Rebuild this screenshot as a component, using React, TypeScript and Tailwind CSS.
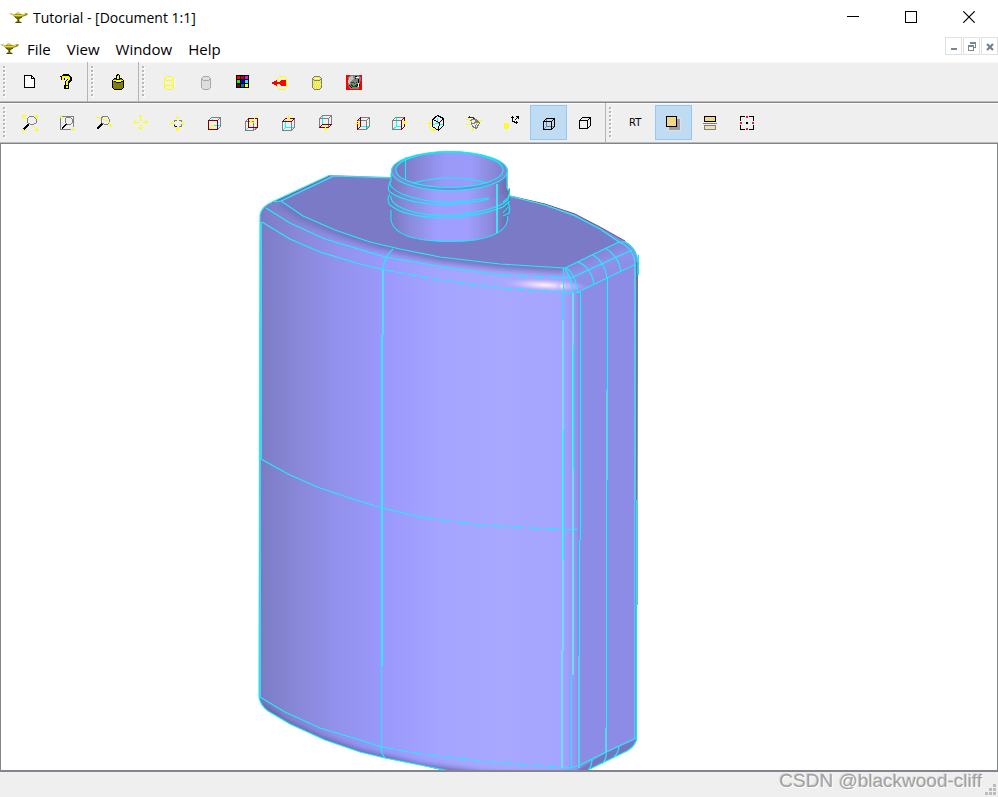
import type { ReactNode } from "react";

const GRAY = "#808080";
const RED = "#800000";
const YEL = "#ffff00";
const CYAN = "#00ffff";

function Stroke({ d, c = "#000", w = 1 }: { d: string; c?: string; w?: number }) {
  return <path d={d} stroke={c} strokeWidth={w} fill="none" />;
}

function Glyph({ children }: { children: ReactNode }) {
  return (
    <svg width="16" height="16" viewBox="0 0 16 16" shapeRendering="crispEdges" className="overflow-visible" aria-hidden="true">
      {children}
    </svg>
  );
}

function Lamp() {
  return (
    <svg width="19" height="12" viewBox="0 0 19 12" className="shrink-0" aria-hidden="true">
      <path d="M0 1.5 L3 1.6 L5 2.6 L7 1.6 L8 .6 L10 .6 L11 1.8 L14 2.6 L16 1.2 L18.5 1.2 L18.8 2.6 L17 3.8 L13 5 L10.6 7 L10.4 9 L12.5 10.4 L6 10.4 L8.2 9 L8 7 L5.5 5 L3.4 3 Z" fill="#9a8f14" />
      <path d="M3 2.2 L6 3.6 L12 3.6 L16 2.2 M7.5 1.6 H10.5" stroke="#efe040" strokeWidth="1" fill="none" />
      <path d="M6 5 L8 6.2 L11 6 L13 5 M6.5 10.4 H12.5 M9.4 7.5 V9.5" stroke="#3c3603" strokeWidth="1" fill="none" />
    </svg>
  );
}

type Tool = { name: string; icon: ReactNode; active?: boolean };

const fileTools: Tool[] = [
  {
    name: "New",
    icon: <><path d="M2.5 1.5 H9.5 L12.5 4.5 V13.5 H2.5 Z" fill="#fff" stroke="#000" /><Stroke d="M9.5 1.5 V4.5 H12.5" /></>,
  },
  {
    name: "Help",
    icon: (
      <>
        <Stroke d="M3.5 5.5 V3.5 L5.5 2 H8.5 L10.5 3.5 V6 L7.5 8.5 V11" w={4} />
        <path d="M5 11 H10 V15 H5 Z" fill="#000" />
        <Stroke d="M3.5 5.5 V3.5 L5.5 2.5 H8.5 L10 4 V5.5 L7.5 8 V10.5" c={YEL} w={2} />
        <path d="M6.5 12 H8.5 V14 H6.5 Z" fill={YEL} />
      </>
    ),
  },
];

const bottleTools: Tool[] = [
  {
    name: "Make bottle",
    icon: (
      <>
        <path d="M2.5 6.5 L4.5 4.5 H11.5 L13.5 6.5 V13.5 L11.5 15.5 H4.5 L2.5 13.5 Z" fill="#808000" stroke="#000" />
        <path d="M3 6 H13 V7 H11 V8 H5 V7 H3 Z" fill={YEL} />
        <path d="M6.5 5 V1.5 L8.5 .5 L9.5 1.5 V5 Z" fill={YEL} stroke="#000" />
        <Stroke d="M3.5 7.5 H5.5 M5.5 8.5 H10.5 M10.5 7.5 H13" />
      </>
    ),
  },
];

function Cylinder({ c, fill }: { c: string; fill: string }) {
  return (
    <>
      <path d="M3.5 4.5 L5.5 2.5 H10.5 L12.5 4.5 V13.5 L10.5 15.5 H5.5 L3.5 13.5 Z" fill={fill} stroke={c} />
      <Stroke d="M3.5 4.5 L5.5 6.5 H10.5 L12.5 4.5" c={c} />
    </>
  );
}

const displayTools: Tool[] = [
  { name: "Wireframe", icon: <><Cylinder c={YEL} fill="none" /><Stroke d="M3.5 12.5 L5.5 11.5 H10.5 L12.5 12.5" c={YEL} /><Stroke d="M13.5 5 V13" c="#fff" /></> },
  { name: "Shading", icon: <Cylinder c="#a8a8a8" fill="#dedede" /> },
  {
    name: "Color",
    icon: (
      <>
        <path d="M1 1 H14 V14 H1 Z" fill="#000" />
        {["#ff0000", "#ff0000", "#ff00ff", "#00ff00", "#0000ff", "#00ffff", "#800000", "#008080", "#ffff00"].map((f, i) => (
          <rect key={i} x={2 + (i % 3) * 4} y={2 + Math.floor(i / 3) * 4} width="3" height="3" fill={i === 1 ? "#c80020" : f} />
        ))}
      </>
    ),
  },
  {
    name: "Material",
    icon: (
      <>
        <Stroke d="M5.5 6 V4.5 L7.5 2.5 H12.5 L14.5 4.5 V13.5 L12.5 15.5 H7.5 L5.5 13.5 V12" c={YEL} />
        <Stroke d="M5.5 4.5 L7.5 6.5 H12.5 L14.5 4.5" c={YEL} />
        <path d="M0 8 H2 V7 H4 V6 H5 V8 H8 V7 H9 V6 H14 V12 H9 V11 H8 V10 H5 V12 H4 V11 H2 V10 H0 Z" fill="#f00" />
      </>
    ),
  },
  {
    name: "Transparency",
    icon: (
      <>
        <Cylinder c={GRAY} fill="#efef50" />
        <Stroke d="M5 8.5 H12 M5 10.5 H12 M5 12.5 H12 M6 4.5 H10" c="#fffbd0" />
        <path d="M5 8.5 H12 M4 10.5 H12 M5 12.5 H12" stroke="#e6de00" strokeDasharray="1 1" />
      </>
    ),
  },
  {
    name: "Texture",
    icon: (
      <>
        <path d="M0 1 H16 V16 H0 Z" fill="#f00" />
        <path d="M2 3 L5 1 H12 L15 4 L13 15 H4 L2 11 Z" fill={GRAY} />
        <path d="M3 3 L7 2 L8 5 L5 7 L4 10 L2 9 Z" fill="#c0c0c0" />
        <Stroke d="M9 2 L11 3 L9 5 M12 5 V8 L14 12 M3 11 L6 14 M10 13 L13 9" />
        <Stroke d="M5 8.5 H8 M10 8.5 H11 M5 10.5 L7 12.5 H9 L11 10.5 M8.5 9 V10" c="#006000" />
        <Stroke d="M10 3.5 H13 M12.5 9 V13" c="#fff" />
      </>
    ),
  },
];

const FRONT = "M1.5 5.5 H10.5 V14.5 H1.5 Z";

const viewTools: Tool[] = [
  {
    name: "Fit all",
    icon: (
      <>
        <Stroke d="M6.5 2.5 L7.5 1.5 H11.5 L14.5 4.5 V7.5 L11.5 9.5 H8.5 L5.5 7.5 V3.5 Z" c={GRAY} />
        <Stroke d="M6.5 9.5 L1.5 14.5" w={1.5} />
        <Stroke d="M.5 3.5 V.5 H3.5 M.5 .5 L4 4 M12.5 .5 H15.5 V3.5 M15.5 .5 L13 3 M.5 12.5 V15.5 H3.5 M12.5 15.5 H15.5 V12.5 M11.5 11.5 L15.5 15.5" c={YEL} />
      </>
    ),
  },
  {
    name: "Zoom window",
    icon: (
      <>
        <Stroke d="M3 1.5 H14.5 V12 M1.5 3 V14.5 H12" c={GRAY} />
        <Stroke d="M7.5 2.5 H11.5 L13.5 4.5 V7.5 L11.5 9.5 H8.5 L6.5 7.5 V4 Z" c={GRAY} />
        <Stroke d="M7 9 L3 13.5" w={1.5} />
        <Stroke d="M0 1.5 H3 M1.5 0 V3 M13 14.5 H16 M14.5 13 V16" c={YEL} />
      </>
    ),
  },
  {
    name: "Zoom",
    icon: (
      <>
        <Stroke d="M5.5 2.5 L7.5 1.5 H11.5 L13.5 4.5 V7.5 L11.5 9.5 H8.5 L5.5 7.5 Z" c={GRAY} />
        <Stroke d="M6 9 L1 14" w={1.5} />
        <Stroke d="M0 2.5 H3 M3 3.5 H5 M6 4.5 H9 M9 5.5 H12 M12 7.5 H14 M13 10.5 H16 M14.5 9 V12" c={YEL} />
      </>
    ),
  },
  {
    name: "Pan",
    icon: <Stroke d="M7.5 0 V6 M5.5 2.5 L7.5 .5 L9.5 2.5 M7.5 10 V15 M5.5 12.5 L7.5 14.5 L9.5 12.5 M0 7.5 H6 M2.5 5.5 L.5 7.5 L2.5 9.5 M10 7.5 H15 M12.5 5.5 L14.5 7.5 L12.5 9.5" c={YEL} />,
  },
  {
    name: "Global pan",
    icon: (
      <>
        <Stroke d="M7.5 1 V4 M5.5 3.5 L7.5 1.5 L9.5 3.5 M7.5 12 V16 M5.5 12.5 L7.5 15 L9.5 12.5 M0 8.5 H4 M2.5 6.5 L.5 8.5 L2.5 10.5 M12 8.5 H15 M12.5 6.5 L14.5 8.5 L12.5 10.5" c={YEL} />
        <Stroke d="M4.5 7 V5.5 H6.5 M9 5.5 H11.5 V7 M11.5 9 V11.5 H9 M6.5 11.5 H4.5 V9" c={GRAY} />
        <Stroke d="M4 10.5 H5 M5 11.5 H7" />
      </>
    ),
  },
  {
    name: "Front",
    icon: (
      <>
        <Stroke d="M1.5 5.5 L4.5 2.5 H13.5 V11.5 L10.5 14.5 M10.5 5.5 L13.5 2.5" c={GRAY} />
        <Stroke d="M5.5 4 V5 M7 10.5 H10 M11 10.5 H13" c={CYAN} />
        <Stroke d={FRONT} c={RED} />
        <Stroke d="M2 14 L6 10 M4 10.5 H6.5 V12" c={YEL} />
      </>
    ),
  },
  {
    name: "Back",
    icon: (
      <>
        <Stroke d="M1.5 6.5 H9.5 V15.5 H1.5 Z M1.5 6.5 L4.5 3.5 M9.5 15.5 L13.5 12.5" c={GRAY} />
        <Stroke d="M2 15 L4 13" c={CYAN} />
        <Stroke d="M4.5 3.5 H13.5 V12.5 H4.5 Z" c={RED} />
        <Stroke d="M13.5 .5 L7 7 M6.5 4.5 V7.5 H10" c={YEL} />
      </>
    ),
  },
  {
    name: "Top",
    icon: (
      <>
        <Stroke d="M4.5 5 V12.5 H13 M1.5 15.5 L4.5 12.5" c={CYAN} />
        <Stroke d="M1.5 6.5 V15.5 H10.5 V6.5 M10.5 15.5 L13.5 12.5 V3.5" c={GRAY} />
        <Stroke d="M1.5 6.5 L4.5 3.5 H13.5 L10.5 6.5 Z" c={RED} />
        <Stroke d="M7.5 0 V5 M5.5 2.5 L7.5 4.5 L9.5 2.5" c={YEL} />
      </>
    ),
  },
  {
    name: "Bottom",
    icon: (
      <>
        <Stroke d="M4.5 1 V9" c={CYAN} />
        <Stroke d="M1.5 12 V3.5 L4.5 .5 H13.5 V9 M1.5 3.5 H10.5 V12 M10.5 3.5 L13.5 .5" c={GRAY} />
        <Stroke d="M1.5 12.5 L4.5 9.5 H13.5 L10.5 12.5 Z" c={RED} />
        <Stroke d="M7.5 16 V10 M5.5 13.5 H10" c={YEL} />
      </>
    ),
  },
  {
    name: "Left",
    icon: (
      <>
        <Stroke d="M5 11.5 H14 M10.5 14.5 L13.5 11.5" c={CYAN} />
        <Stroke d="M2 5.5 H11.5 V14.5 H2 M5 2.5 H14.5 V11.5 L11.5 14.5 M11.5 5.5 L14.5 2.5" c={GRAY} />
        <Stroke d="M2.5 14.5 V5.5 L5.5 2.5 V11.5 Z" c={RED} />
        <Stroke d="M0 8.5 H5 M2.5 6.5 L4.5 8.5 L2.5 10.5" c={YEL} />
      </>
    ),
  },
  {
    name: "Right",
    icon: (
      <>
        <Stroke d="M4.5 3 V11.5 H10 M1 14 L4.5 11.5" c={CYAN} />
        <Stroke d="M.5 5.5 H9.5 V14.5 H.5 Z M.5 5.5 L3.5 2.5 H13" c={GRAY} />
        <Stroke d="M9.5 14.5 V5.5 L12.5 2.5 V11.5 Z" c={RED} />
        <Stroke d="M16 7.5 H10 M13.5 5.5 L11.5 7.5 L13.5 9.5" c={YEL} />
      </>
    ),
  },
  {
    name: "Axonometric",
    icon: (
      <>
        <Stroke d="M8 3 V8 L4 10 M8 8 L14 10" c={CYAN} />
        <Stroke d="M3.5 4.5 L8.5 .5 L14.5 3.5 L10.5 7.5 Z M3.5 4.5 V11.5 L9.5 15.5 L10.5 7.5 M14.5 3.5 V10.5 L9.5 15.5" />
        <Stroke d="M.5 7 V12.5 L5.5 15.5 M-1 8.5 H3 M5.5 13 V15.5 H2" c={YEL} />
      </>
    ),
  },
  {
    name: "Rotate view",
    icon: (
      <>
        <Stroke d="M4.5 5.5 L8.5 3.5 L13.5 7.5 L10.5 13.5 L6.5 11.5 Z M6.5 8.5 L10.5 7.5 L13.5 7.5 M8.5 3.5 L10.5 7.5 L9.5 12.5 M4.5 5.5 L6.5 8.5" c={GRAY} />
        <Stroke d="M2 2.5 H5 M3.5 1 V3 M5 2.5 H7 L9 4" c="#303030" />
        <Stroke d="M0 4.5 H3 M3 6.5 H6 M12 5.5 H16 M0 9.5 H4 M10 8.5 H13 M5 14.5 H8 M6.5 13 V16" c={YEL} />
      </>
    ),
  },
  {
    name: "Reset view",
    icon: (
      <>
        <path d="M1 9 H2 V8 H5 V9 H6 V13 H5 V14 H2 V13 H1 Z M3 10 V12 H4 V10 Z" fill={YEL} fillRule="evenodd" />
        <Stroke d="M9.5 1 V6.5 H12 M8 2.5 H11 M11.5 5.5 L15.5 1.5 M12.5 1.5 H15.5 V4 M10.5 7.5 H15 M13.5 6 V9" />
      </>
    ),
  },
  {
    name: "Hidden lines on",
    active: true,
    icon: (
      <>
        <Stroke d="M6.5 4 V11.5 H14 M4 14 L6.5 11.5" c={GRAY} />
        <Stroke d="M3.5 6.5 H11.5 V14.5 H3.5 Z M3.5 6.5 L6.5 3.5 H14.5 V11.5 L11.5 14.5 M11.5 6.5 L14.5 3.5" />
      </>
    ),
  },
  {
    name: "Hidden lines off",
    icon: <Stroke d="M2.5 5.5 H10.5 V13.5 H2.5 Z M2.5 5.5 L5.5 2.5 H13.5 V10.5 L10.5 13.5 M10.5 5.5 L13.5 2.5" />,
  },
];

const renderTools: Tool[] = [
  { name: "Ray tracing", icon: null },
  {
    name: "Shadows",
    active: true,
    icon: (
      <>
        <path d="M3 3 H16 V16 H3 Z" fill="#e0e0e0" />
        <path d="M4 4 H15 V15 H4 Z" fill="#9c9c9c" />
        <path d="M1.5 1.5 H11.5 V11.5 H1.5 Z" fill="#f0d784" stroke="#000" />
      </>
    ),
  },
  {
    name: "Reflections",
    icon: (
      <>
        <path d="M2.5 1.5 H13.5 V6.5 H2.5 Z" fill="#f0d784" stroke="#000" />
        <Stroke d="M1 8.5 H15" c={GRAY} />
        <path d="M2.5 10.5 H13.5 V14.5 H2.5 Z" fill="#f0e2ae" stroke={GRAY} />
      </>
    ),
  },
  {
    name: "Antialiasing",
    icon: (
      <>
        <Stroke d="M1.5 6 V1.5 H6 M10 1.5 H14.5 V6 M14.5 10 V14.5 H10 M6 14.5 H1.5 V10" />
        <path d="M7 1 H9 V3 H7 Z M7 13 H9 V15 H7 Z M1 7 H3 V9 H1 Z M13 7 H15 V9 H13 Z" fill="#ed1c24" />
        <path d="M7 7 H9 V9 H7 Z" fill="#000" />
      </>
    ),
  },
];

function ToolGroup({ tools, last }: { tools: Tool[]; last?: boolean }) {
  return (
    <div className={`flex items-start pt-0.5 ${last ? "" : "border-r border-[#b4b4b4] pr-px"}`} role="group">
      <div className="flex w-3 flex-col gap-0.5 pt-0.5 pl-[3px]" aria-hidden="true">
        {Array.from({ length: 8 }, (_, i) => (
          <span key={i} className="size-0.5 bg-[#b8b8b8] shadow-[1px_1px_0_#ffffff]" />
        ))}
      </div>
      {tools.map((t) => (
        <button
          key={t.name}
          type="button"
          aria-label={t.name}
          className={`flex h-[35px] w-[37px] items-start border pt-[9px] pl-[9px] ${
            t.active ? "border-[#90c8f6] bg-[#c0dcf3]" : "border-transparent"
          }`}
        >
          {t.icon ? (
            <Glyph>{t.icon}</Glyph>
          ) : (
            <span className="pl-px font-['DejaVu_Sans',sans-serif] text-[10px] leading-4">RT</span>
          )}
        </button>
      ))}
    </div>
  );
}

function Toolbar({ label, children }: { label: string; children: ReactNode }) {
  return (
    <div
      role="toolbar"
      aria-label={label}
      className="flex h-[41px] shrink-0 border-b border-[#84848e] bg-[#efefef] shadow-[inset_0_-1px_0_#bcbcbc,inset_0_1px_0_#fafafa]"
    >
      {children}
    </div>
  );
}

const BODY =
  "M260 215 Q261 207 272 202 L330 175 L390 177 L510 196 L545 204 L575 214 L600 227 L625 241 Q637 248 638 262 L638 275 L636 741 Q634 747 627 751 L590 769 L582 772 H450 L420 765 L385 758 L360 752 L325 740 L290 724 L268 711 Q260 705 259 697 Z";
const TOP = "M281 201 L334 176 L390 178 L510 197 L545 205 L575 216 L600 229 L619 242 L565 268 L500 264 L440 257 L400 249 L370 242 L335 230 L303 216 Z";

function Bottle() {
  return (
    <svg viewBox="1 144 996 626" preserveAspectRatio="xMidYMin slice" className="block size-full" role="img" aria-label="Shaded bottle model">
      <defs>
        <linearGradient id="front" gradientUnits="userSpaceOnUse" x1="260" y1="0" x2="581" y2="0">
          <stop offset="0" stopColor="#7b7bc5" />
          <stop offset=".08" stopColor="#8584d2" />
          <stop offset=".22" stopColor="#9190e9" />
          <stop offset=".38" stopColor="#9a99fc" />
          <stop offset=".55" stopColor="#a4a3ff" />
          <stop offset=".75" stopColor="#a9a8ff" />
          <stop offset=".94" stopColor="#a5a4ff" />
          <stop offset=".98" stopColor="#9796f3" />
          <stop offset="1" stopColor="#8786de" />
        </linearGradient>
        <linearGradient id="neck" x1="0" x2="1">
          <stop offset="0" stopColor="#7877bd" />
          <stop offset=".14" stopColor="#8988d9" />
          <stop offset=".4" stopColor="#a09fff" />
          <stop offset=".65" stopColor="#a09fff" />
          <stop offset=".85" stopColor="#8c8be0" />
          <stop offset="1" stopColor="#6d6cac" />
        </linearGradient>
        <linearGradient id="bore" x1="0" x2="1">
          <stop offset="0" stopColor="#7776bc" />
          <stop offset=".45" stopColor="#9a99f8" />
          <stop offset=".7" stopColor="#9c9bfb" />
          <stop offset="1" stopColor="#8180cc" />
        </linearGradient>
        <linearGradient id="edge" gradientUnits="userSpaceOnUse" x1="590" y1="250" x2="603" y2="281">
          <stop offset="0" stopColor="#7f7ecd" />
          <stop offset=".5" stopColor="#9190ea" />
          <stop offset="1" stopColor="#8c8be5" />
        </linearGradient>
        <radialGradient id="shine">
          <stop offset="0" stopColor="#fff0fb" />
          <stop offset=".4" stopColor="#d6c8ff" />
          <stop offset="1" stopColor="#a8a7ff" stopOpacity="0" />
        </radialGradient>
        <filter id="soft" x="-10%" y="-40%" width="120%" height="180%"><feGaussianBlur stdDeviation="3" /></filter>
        <clipPath id="shell"><path d={BODY} /></clipPath>
      </defs>
      <path d={BODY} fill="url(#front)" />
      <g clipPath="url(#shell)">
        <path d="M281 201 L303 216 L335 230 L370 242 L400 249 L440 257 L500 264 L565 268" stroke="#7473bc" strokeWidth="10" fill="none" filter="url(#soft)" />
        <path d="M259 706 L285 724 L320 740 L360 754 L420 768 L480 776 L560 782" stroke="#5d5c99" strokeWidth="7" fill="none" filter="url(#soft)" />
        <path d="M580 292 L637 264 V739 L580 766 Z" fill="#8c8be5" />
        <path d="M565 268 L619 242 L637 250 V264 L580 292 Z" fill="url(#edge)" />
        <path d="M578 770 L606 753 L637 739 V755 L590 775 Z" fill="#7675bd" />
        <ellipse cx="545" cy="285" rx="46" ry="7" fill="url(#shine)" transform="rotate(3 545 285)" />
        <ellipse cx="562" cy="286" rx="6" ry="5" fill="url(#shine)" />
      </g>
      <path d={TOP} fill="#7b7ac7" />
      <path d="M272 203 L330 176 M510 196 L545 204 L575 214 L600 227 L625 241" stroke="#5c5b91" strokeWidth="1" fill="none" />
      <path d="M637 262 V605" stroke="#54538a" strokeWidth="1" fill="none" />

      <g stroke="#22ebfa" strokeWidth="1.2" fill="none" strokeLinejoin="round">
        <path d="M259 697 L260 215 Q261 207 272 202 L281 201 L334 176 L390 178 M330 175 L272 202" />
        <path d="M259 697 Q260 705 268 711 L290 724 L325 740 L360 752 L385 758 L420 765 L450 771" />
        <path d="M281 201 L303 216 L335 230 L370 242 L400 249 L440 257 L500 264 L565 268 L619 242" />
        <path d="M266 208 L290 223 L325 239 L385 257 L450 268 L500 275" />
        <path d="M500 275 L571 278" strokeDasharray="12 4" />
        <path d="M262 222 L290 239 L320 252 L360 264 L385 270" />
        <path d="M385 270 L440 280 L500 288 L573 293 L580 292" strokeDasharray="9 3" />
        <path d="M571 278 L632 250 M578 292 L636 264" />
        <path d="M510 196 L545 205 L575 216 L600 229 L619 242 H625 Q637 248 638 262 V275 M619 242 Q634 248 635 264" />
        <path d="M578 262 Q591 267 594 284 M593 255 Q605 262 607 278 M605 248 Q618 255 621 271 M565 268 Q574 270 578 292 M565 268 Q571 277 573 293" />
        <path d="M393 249 Q384 257 383 270" />
        <path d="M261 459 L290 475 L320 488 L350 498 L382 508 L420 517" />
        <path d="M420 517 L480 525 L530 528 L565 530 L580 529" strokeDasharray="14 4" />
        <path d="M260 697 L285 712 L320 728 L360 740 L382 747" />
        <path d="M382 747 L420 754 L480 761 L540 766 L570 768" strokeDasharray="12 3" />
        <path d="M570 768 L580 765 L606 752 L636 738 M592 759 Q592 766 588 771 M606 752 Q607 759 602 764 M619 746 Q619 752 614 757 M636 741 Q634 747 627 751 L590 769" />
        <path d="M381 748 Q382 755 385 758" />
      </g>
      <g fill="none" shapeRendering="crispEdges">
        <path d="M260.5 222 V460 M259.5 460 V697" stroke="#3fd5ea" strokeWidth="2" />
        <path d="M381.5 666 V748" stroke="#20e8fa" />
        <path d="M383 270 V335" stroke="#55daf8" strokeWidth="2" />
        <path d="M382 335 V666" stroke="#38e4fa" strokeWidth="2" />
        <path d="M563.5 268 V320 M571.5 675 V768" stroke="#14eefa" />
        <path d="M563 320 V650 M562 650 V768" stroke="#70dcff" strokeWidth="2" />
        <path d="M563.5 430 V560" stroke="#00ffff" />
        <path d="M573 293 V675" stroke="#70dcff" strokeWidth="2" />
        <path d="M573.5 345 V470" stroke="#00ffff" />
        <path d="M580.5 292 V540 M579.5 540 V656" stroke="#00ffff" />
        <path d="M579 656 V768" stroke="#55d2f0" strokeWidth="2" />
        <path d="M607.5 278 V390 M606.5 480 V728" stroke="#00ffff" />
        <path d="M607 390 V480 M606 728 V752" stroke="#55d8ed" strokeWidth="2" />
        <path d="M635 264 V500" stroke="#51cce7" strokeWidth="2" />
        <path d="M634.5 500 V739 M636.5 500 V741 M638.5 255 V275" stroke="#1ce4f2" />
      </g>

      <path d="M391 171 V220 Q394 236 425 240 Q450 243 475 240 Q505 235 507.500 220 V171 Z" fill="url(#neck)" />
      <path d="M388 184 Q388 194 402 199 Q420 205 450 205 Q480 205 503 194 L510 188 L510 202 Q502 216 450 219 Q400 217 390 206 Q386 200 390 195 Z" fill="url(#neck)" />
      <ellipse cx="449.500" cy="171" rx="58" ry="19.500" fill="#8584d5" />
      <ellipse cx="449.500" cy="170" rx="53.500" ry="17.500" fill="url(#bore)" />
      <g stroke="#14edf8" strokeWidth="1.1" fill="none">
        <ellipse cx="449.500" cy="171" rx="58" ry="19.500" />
        <ellipse cx="449.500" cy="170" rx="53.500" ry="17.500" />
        <path d="M413 183 Q450 173 487 183 M405.500 157 V180" />
        <path d="M391 173 V181 Q386 188 390 192 Q402 201 430 204 Q460 206 489 199" />
        <path d="M390 181 Q388 187 402 194 Q425 203 455 202 L489 198" />
        <path d="M390 194 Q386 200 390 205 Q404 217 443 218 Q478 217 503 207 L510 201" />
        <path d="M391 196 Q390 204 407 210 Q428 217 455 215 Q495 211 508 200 L509 194" />
        <path d="M507 172 V188 Q511 191 509 197 L503 202 M508 203 Q511 208 509 213 L503 216 M508 207 L503 213" />
        <path d="M391 210 V220 Q394 236 425 240 Q450 243 475 240 Q505 235 507.500 220 V216" />
        <path d="M497 184 V233" strokeWidth="2" stroke="#48dff6" />
      </g>
    </svg>
  );
}

const captionBtn = "flex h-[34px] w-[58px] items-center justify-center";
const mdiBtn = "flex h-[18px] w-[17px] items-center justify-center border border-[#e0e0e0]";

export default function App() {
  return (
    <div className="flex h-screen flex-col overflow-hidden bg-white font-['Open_Sans','Noto_Sans',sans-serif] text-black">
      <header className="flex h-9 shrink-0 items-center pl-[9px]">
        <Lamp />
        <h1 className="ml-[5px] text-sm leading-5">Tutorial - [Document 1:1]</h1>
        <div className="ml-auto flex self-start">
          <button type="button" aria-label="Minimize" className={captionBtn}>
            <svg width="12" height="12" shapeRendering="crispEdges"><Stroke d="M0 5.5 H12" /></svg>
          </button>
          <button type="button" aria-label="Maximize" className={captionBtn}>
            <svg width="12" height="12" shapeRendering="crispEdges"><Stroke d="M.5 .5 H11.5 V11.5 H.5 Z" /></svg>
          </button>
          <button type="button" aria-label="Close" className={captionBtn}>
            <svg width="12" height="12"><Stroke d="M.3 .3 L11.7 11.7 M11.7 .3 L.3 11.7" w={1.2} /></svg>
          </button>
        </div>
      </header>

      <nav className="flex h-[26px] shrink-0 items-center" aria-label="Menu">
        <Lamp />
        <div className="ml-2 flex gap-4 text-[15px] leading-5">
          {["File", "View", "Window", "Help"].map((m) => (
            <button key={m} type="button">{m}</button>
          ))}
        </div>
        <div className="ml-auto flex gap-px self-start pt-px">
          <button type="button" aria-label="Minimize document" className={mdiBtn}>
            <svg width="9" height="9" shapeRendering="crispEdges"><path d="M2 6 H8 V8 H2 Z" fill="#788896" /></svg>
          </button>
          <button type="button" aria-label="Restore document" className={mdiBtn}>
            <svg width="9" height="9" shapeRendering="crispEdges"><path d="M3 0 H9 V6 H7 V5 H8 V2 H3 Z M1 3 H7 V9 H1 Z M2 5 V8 H6 V5 Z" fillRule="evenodd" fill="#788896" /></svg>
          </button>
          <button type="button" aria-label="Close document" className={mdiBtn}>
            <svg width="9" height="9"><Stroke d="M2 2 L8 8 M8 2 L2 8" c="#708190" w={2.2} /></svg>
          </button>
        </div>
      </nav>

      <Toolbar label="Document tools">
        <ToolGroup tools={fileTools} />
        <ToolGroup tools={bottleTools} />
        <ToolGroup tools={displayTools} last />
      </Toolbar>
      <Toolbar label="View tools">
        <ToolGroup tools={viewTools} />
        <ToolGroup tools={renderTools} last />
      </Toolbar>

      <main className="min-h-0 flex-1 overflow-hidden border-x border-b-2 border-[#84848e] bg-white">
        <Bottle />
      </main>

      <footer className="flex h-[25px] shrink-0 items-end justify-end bg-[#efefef]">
        <span className="mr-0.5 self-start font-['Liberation_Sans',sans-serif] text-[19px] leading-[18px] text-[#a0a0a0] [text-shadow:1px_1px_0_#ffffff,-1px_-1px_0_#8c8c8c40]">
          CSDN @blackwood-cliff
        </span>
        <svg width="14" height="14" shapeRendering="crispEdges" className="text-[#bcbcbc]" aria-hidden="true">
          <path d="M9 1 H12 V4 H9 Z M9 5 H12 V8 H9 Z M5 5 H8 V8 H5 Z M9 9 H12 V12 H9 Z M5 9 H8 V12 H5 Z M1 9 H4 V12 H1 Z" fill="currentColor" />
        </svg>
      </footer>
    </div>
  );
}
